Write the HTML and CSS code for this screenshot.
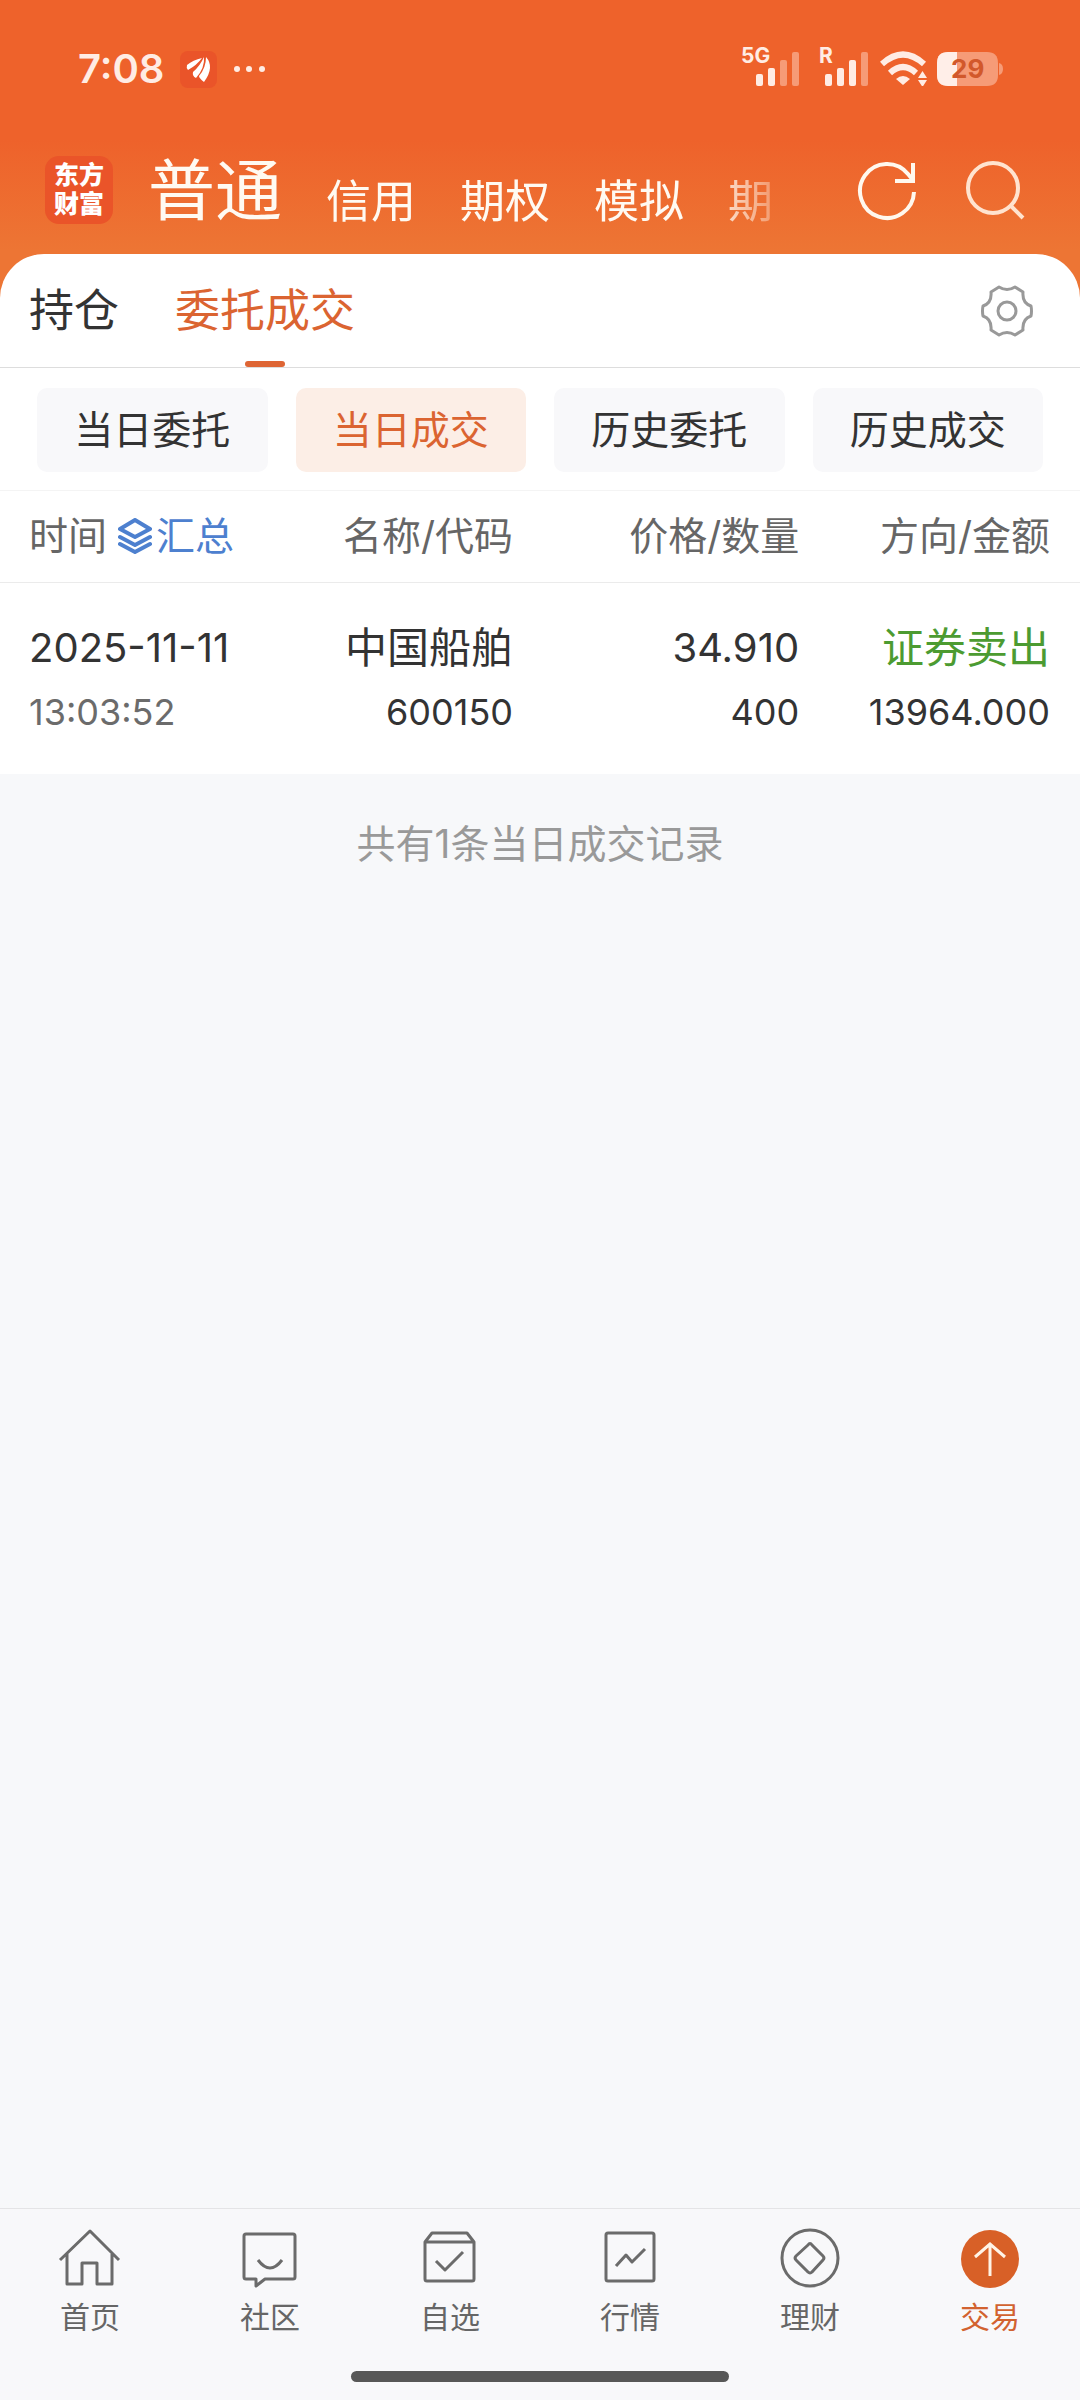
FILE: index.html
```html
<!DOCTYPE html>
<html lang="zh-CN">
<head>
<meta charset="utf-8">
<meta name="viewport" content="width=device-width, initial-scale=1">
<title>当日成交</title>
<link rel="stylesheet" href="styles.css">
</head>
<body>
<div class="app">
  <div class="status">
    <span class="clock">7:08</span>
    <svg class="notice" width="37" height="37" viewBox="0 0 37 37" aria-hidden="true">
      <rect width="37" height="37" rx="8" fill="#ea5429"/>
      <path fill="#fff" d="M7 14Q13 9 22 7Q17 14 8 19Q6 17 7 14ZM13 21Q20 15 24 6Q25 17 16 27Q12 25 13 21ZM24 31Q19 27 19 25Q26 17 26 6Q35 16 24 31Z"/>
    </svg>
    <svg class="dots" width="32" height="8" viewBox="0 0 32 8" fill="#ffece4" aria-hidden="true">
      <circle cx="4" cy="4" r="3"/><circle cx="16" cy="4" r="3"/><circle cx="29" cy="4" r="3"/>
    </svg>
    <div class="indicators">
      <svg width="60" height="52" viewBox="0 -10 60 52" fill="#ffece4" role="img" aria-label="5G 信号">
        <text class="net" x="0" y="19">5G</text>
        <rect x="15" y="30" width="7" height="12" rx="2"/><rect x="27" y="24" width="7" height="18" rx="2"/>
        <g fill="#f69b77"><rect x="39" y="16" width="7" height="26" rx="2"/><rect x="51" y="8" width="7" height="34" rx="2"/></g>
      </svg>
      <svg width="52" height="52" viewBox="0 -10 52 52" fill="#ffece4" role="img" aria-label="漫游信号">
        <text class="net" x="0" y="19">R</text>
        <rect x="6" y="30" width="7" height="12" rx="2"/><rect x="18" y="24" width="7" height="18" rx="2"/><rect x="30" y="16" width="7" height="26" rx="2"/>
        <rect x="42" y="8" width="7" height="34" rx="2" fill="#f69b77"/>
      </svg>
      <svg width="48" height="42" viewBox="0 0 48 42" fill="none" stroke="#ffece4" stroke-width="6" role="img" aria-label="无线网络">
        <path d="M2 20Q23 1 44 20M10 29Q23 17 36 29"/>
        <path d="M16 35Q23 29 30 35L23 41Z" fill="#ffece4" stroke="none"/>
        <path d="M38 34L42.500 27L47 34ZM38 36H47L42.500 43Z" fill="#ffece4" stroke="none"/>
      </svg>
      <svg class="battery" width="66" height="34" viewBox="0 0 66 34" role="img" aria-label="电量 29%">
        <path d="M11 0H50Q61 0 61 11V23Q61 34 50 34H11Q0 34 0 23V11Q0 0 11 0Z" fill="#f69b77"/>
        <path d="M62 11Q66 12 66 17Q66 22 62 23Z" fill="#f69b77"/>
        <path d="M11 0H20V34H11Q0 34 0 23V11Q0 0 11 0Z" fill="#ffeee8"/>
        <text class="level" x="14" y="26">29</text>
      </svg>
    </div>
  </div>

  <header class="header">
    <a class="brand" href="#home">东方<br>财富</a>
    <nav class="accounts" aria-label="账户">
      <a class="current" href="#normal">普通</a>
      <a href="#credit">信用</a>
      <a href="#option">期权</a>
      <a href="#demo">模拟</a>
      <a href="#futures">期</a>
    </nav>
    <div class="tools">
      <button type="button" aria-label="刷新">
        <svg width="64" height="64" viewBox="0 0 64 64" fill="none" stroke="#fff8ee" stroke-width="4">
          <path d="M59 34A27 27 0 1 1 53 16L58 22M40 23H58V5"/>
        </svg>
      </button>
      <button type="button" aria-label="搜索">
        <svg width="64" height="64" viewBox="0 0 64 64" fill="none" stroke="#ffe3cf" stroke-width="4">
          <circle cx="30" cy="30" r="25"/><path d="M47 47L60 60"/>
        </svg>
      </button>
    </div>
  </header>

  <main class="sheet">
    <div class="tabs">
      <a href="#positions">持仓</a>
      <a class="current" href="#orders">委托成交</a>
      <button class="settings" type="button" aria-label="设置">
        <svg width="54" height="54" viewBox="0 0 54 54" fill="none" stroke="#999" stroke-width="3" stroke-linejoin="round">
          <path d="M19 3Q27 8 35 3L43 8Q42 19 51 22Q52 27 51 32Q42 35 43 46L35 51Q27 46 19 51L11 46Q12 35 3 32Q2 27 3 22Q12 19 11 8Z"/>
          <circle cx="27" cy="27" r="9"/>
        </svg>
      </button>
    </div>
    <div class="chips">
      <button type="button">当日委托</button>
      <button class="on" type="button">当日成交</button>
      <button type="button">历史委托</button>
      <button type="button">历史成交</button>
    </div>
    <table class="deals">
      <thead>
        <tr>
          <th scope="col"><div class="time-head">时间
            <button class="summary" type="button">
              <svg width="34" height="36" viewBox="0 0 34 36" fill="none" stroke="#4d80cf" stroke-width="4" stroke-linejoin="round" stroke-linecap="round">
                <path d="M17 2L32 11L17 19L2 11ZM2 19L17 27L32 19M2 26L17 34L32 26"/>
              </svg>汇总</button></div></th>
          <th scope="col">名称/代码</th>
          <th scope="col">价格/数量</th>
          <th scope="col">方向/金额</th>
        </tr>
      </thead>
      <tbody>
        <tr>
          <td><div class="main">2025-11-11</div><div class="sub muted">13:03:52</div></td>
          <td><div class="main name">中国船舶</div><div class="sub">600150</div></td>
          <td><div class="main">34.910</div><div class="sub">400</div></td>
          <td><div class="main name sell">证券卖出</div><div class="sub">13964.000</div></td>
        </tr>
      </tbody>
    </table>
  </main>
  <p class="count">共有1条当日成交记录</p>

  <footer class="bottom">
    <nav class="menu" aria-label="主菜单">
      <a href="#home"><svg width="64" height="64" viewBox="0 0 64 64"><path d="M2 34L32 5L61 34M9 28V58H24V37H39V58H54V28"/></svg>首页</a>
      <a href="#community"><svg width="64" height="64" viewBox="0 0 64 64"><path d="M8 8H55Q57 8 57 10V51Q57 53 55 53H27L18 60V53H8Q6 53 6 51V10Q6 8 8 8Z"/><path d="M20 34Q32 50 44 34"/></svg>社区</a>
      <a href="#watchlist"><svg width="64" height="64" viewBox="0 0 64 64"><path d="M7 16L14 7H49L56 16V53Q56 55 54 55H9Q7 55 7 53ZM7 16H56M18 35L27 44L45 26"/></svg>自选</a>
      <a href="#market"><svg width="64" height="64" viewBox="0 0 64 64"><rect x="8" y="7" width="48" height="48" rx="2"/><path d="M18 40L28 29L34 36L47 23"/></svg>行情</a>
      <a href="#wealth"><svg width="64" height="64" viewBox="0 0 64 64"><circle cx="32" cy="32" r="28"/><path d="M30 19Q32 16 34 19L45 30Q47 32 45 34L34 46Q32 48 30 46L18 34Q16 32 18 30Z"/></svg>理财</a>
      <a class="current" href="#trade"><svg width="64" height="64" viewBox="0 0 64 64"><circle class="disc" cx="32" cy="33" r="29"/><path class="arrow" d="M32 50V18M17 31L32 18L47 31"/></svg>交易</a>
    </nav>
    <div class="home-bar"></div>
  </footer>
</div>
</body>
</html>
```
FILE: styles.css
```css
* {
  box-sizing: border-box;
}

body {
  margin: 0;
  font-family: Inter, "Noto Sans CJK SC", sans-serif;
  color: #333;
  background: #f7f8fa;
}

a {
  color: inherit;
  text-decoration: none;
}

button {
  margin: 0;
  padding: 0;
  border: 0;
  background: none;
  color: inherit;
  font: inherit;
}

svg {
  display: block;
  flex: none;
}

.app {
  display: flex;
  flex-direction: column;
  min-height: 100vh;
  background: linear-gradient(#ee622b 140px, #ed7534 250px) top / 100% 320px no-repeat;
}

/* Device status bar */
.status {
  display: flex;
  align-items: center;
  height: 138px;
  padding: 0 77px 0 78px;
  color: #ffece4;
}

.clock {
  font-size: 40px;
  font-weight: 600;
  line-height: 48px;
}

.notice {
  margin-left: 16px;
}

.dots {
  margin-left: 16px;
}

.indicators {
  display: flex;
  align-items: flex-end;
  gap: 18px;
  margin-left: auto;
  padding-bottom: 18px;
}

.indicators svg + svg + svg {
  margin-left: -9px;
}

.net {
  font-size: 21px;
  font-weight: 700;
}

.level {
  font-size: 26px;
  font-weight: 700;
  fill: #d2582b;
}

/* Account switcher */
.header {
  display: flex;
  align-items: center;
  height: 116px;
  padding: 0 53px 12px 45px;
  color: #fffaf2;
}

.brand {
  display: flex;
  align-items: center;
  justify-content: center;
  width: 68px;
  height: 68px;
  border-radius: 14px;
  background: #ea5429;
  color: #fff;
  font-size: 25px;
  font-weight: 900;
  line-height: 29px;
}

.accounts {
  display: flex;
  flex: 1;
  align-items: flex-end;
  gap: 44px;
  min-width: 0;
  margin-left: 35px;
  padding: 12px 0;
  overflow: hidden;
  white-space: nowrap;
  font-size: 45px;
  line-height: 1;
  -webkit-mask-image: linear-gradient(to left, rgba(0, 0, 0, 0.3), #000 70px);
  mask-image: linear-gradient(to left, rgba(0, 0, 0, 0.3), #000 70px);
}

.accounts .current {
  font-size: 67px;
}

.tools {
  display: flex;
  gap: 44px;
  margin-left: 80px;
}

/* White panel */
.sheet {
  border-radius: 44px 44px 0 0;
  background: #fff;
}

.tabs {
  display: flex;
  align-items: stretch;
  gap: 56px;
  height: 114px;
  padding: 0 46px 0 29px;
  border-bottom: 1px solid #ddd;
  font-size: 45px;
  line-height: 113px;
}

.tabs .current {
  position: relative;
  color: #db6431;
}

.tabs .current::after {
  content: "";
  position: absolute;
  bottom: 0;
  left: 50%;
  width: 40px;
  height: 6px;
  margin-left: -20px;
  border-radius: 3px;
  background: #de6534;
}

.settings {
  margin-left: auto;
}

.chips {
  display: grid;
  grid-template-columns: repeat(4, 1fr);
  gap: 28px;
  padding: 20px 37px 18px;
  border-bottom: 1px solid #f4f4f4;
}

.chips button {
  height: 84px;
  border-radius: 10px;
  background: #f8f8fa;
  font-size: 39px;
  line-height: 48px;
}

.chips .on {
  background: #fceee6;
  color: #db6431;
}

/* Deals table */
.deals {
  width: 100%;
  border-collapse: collapse;
  table-layout: fixed;
}

.deals th {
  height: 91px;
  padding: 0;
  border-bottom: 1px solid #ebebeb;
  color: #666;
  font-size: 39px;
  font-weight: 400;
  line-height: 48px;
  text-align: right;
  white-space: nowrap;
}

.deals td {
  padding: 33px 0 30px;
  text-align: right;
  white-space: nowrap;
}

.deals th:first-child,
.deals td:first-child {
  width: 25%;
  padding-left: 29px;
  text-align: left;
}

.deals th:nth-child(2) {
  width: 22.5%;
}

.deals th:nth-child(3) {
  width: 26.5%;
}

.deals th:last-child,
.deals td:last-child {
  padding-right: 30px;
}

.time-head {
  display: flex;
  align-items: center;
  gap: 11px;
}

.summary {
  display: flex;
  align-items: center;
  gap: 4px;
  color: #4d80cf;
}

.main {
  font-size: 40px;
  line-height: 64px;
}

.name {
  font-size: 42px;
}

.sub {
  font-size: 36px;
  line-height: 64px;
}

.muted {
  color: #6b6b6b;
}

.sell {
  color: #4c9b31;
}

.count {
  flex: 1;
  margin: 0;
  padding-top: 46px;
  background: #f7f8fa;
  color: #999;
  font-size: 39px;
  line-height: 48px;
  text-align: center;
}

/* Bottom navigation */
.bottom {
  padding: 17px 0 18px;
  border-top: 1px solid #e4e4e6;
  background: #f8f8fa;
}

.menu {
  display: grid;
  grid-template-columns: repeat(6, 1fr);
  color: #666;
  font-size: 30px;
  line-height: 36px;
}

.menu a {
  display: flex;
  flex-direction: column;
  align-items: center;
  gap: 9px;
}

.menu svg {
  fill: none;
  stroke: #6b6b6b;
  stroke-width: 3px;
  stroke-linejoin: round;
}

.menu .current {
  color: #d2622f;
}

.menu .disc {
  fill: #d86027;
  stroke: none;
}

.menu .arrow {
  stroke: #fff3e6;
  stroke-linejoin: miter;
}

.home-bar {
  width: 35%;
  height: 11px;
  margin: 36px auto 0;
  border-radius: 6px;
  background: #575757;
}
```
